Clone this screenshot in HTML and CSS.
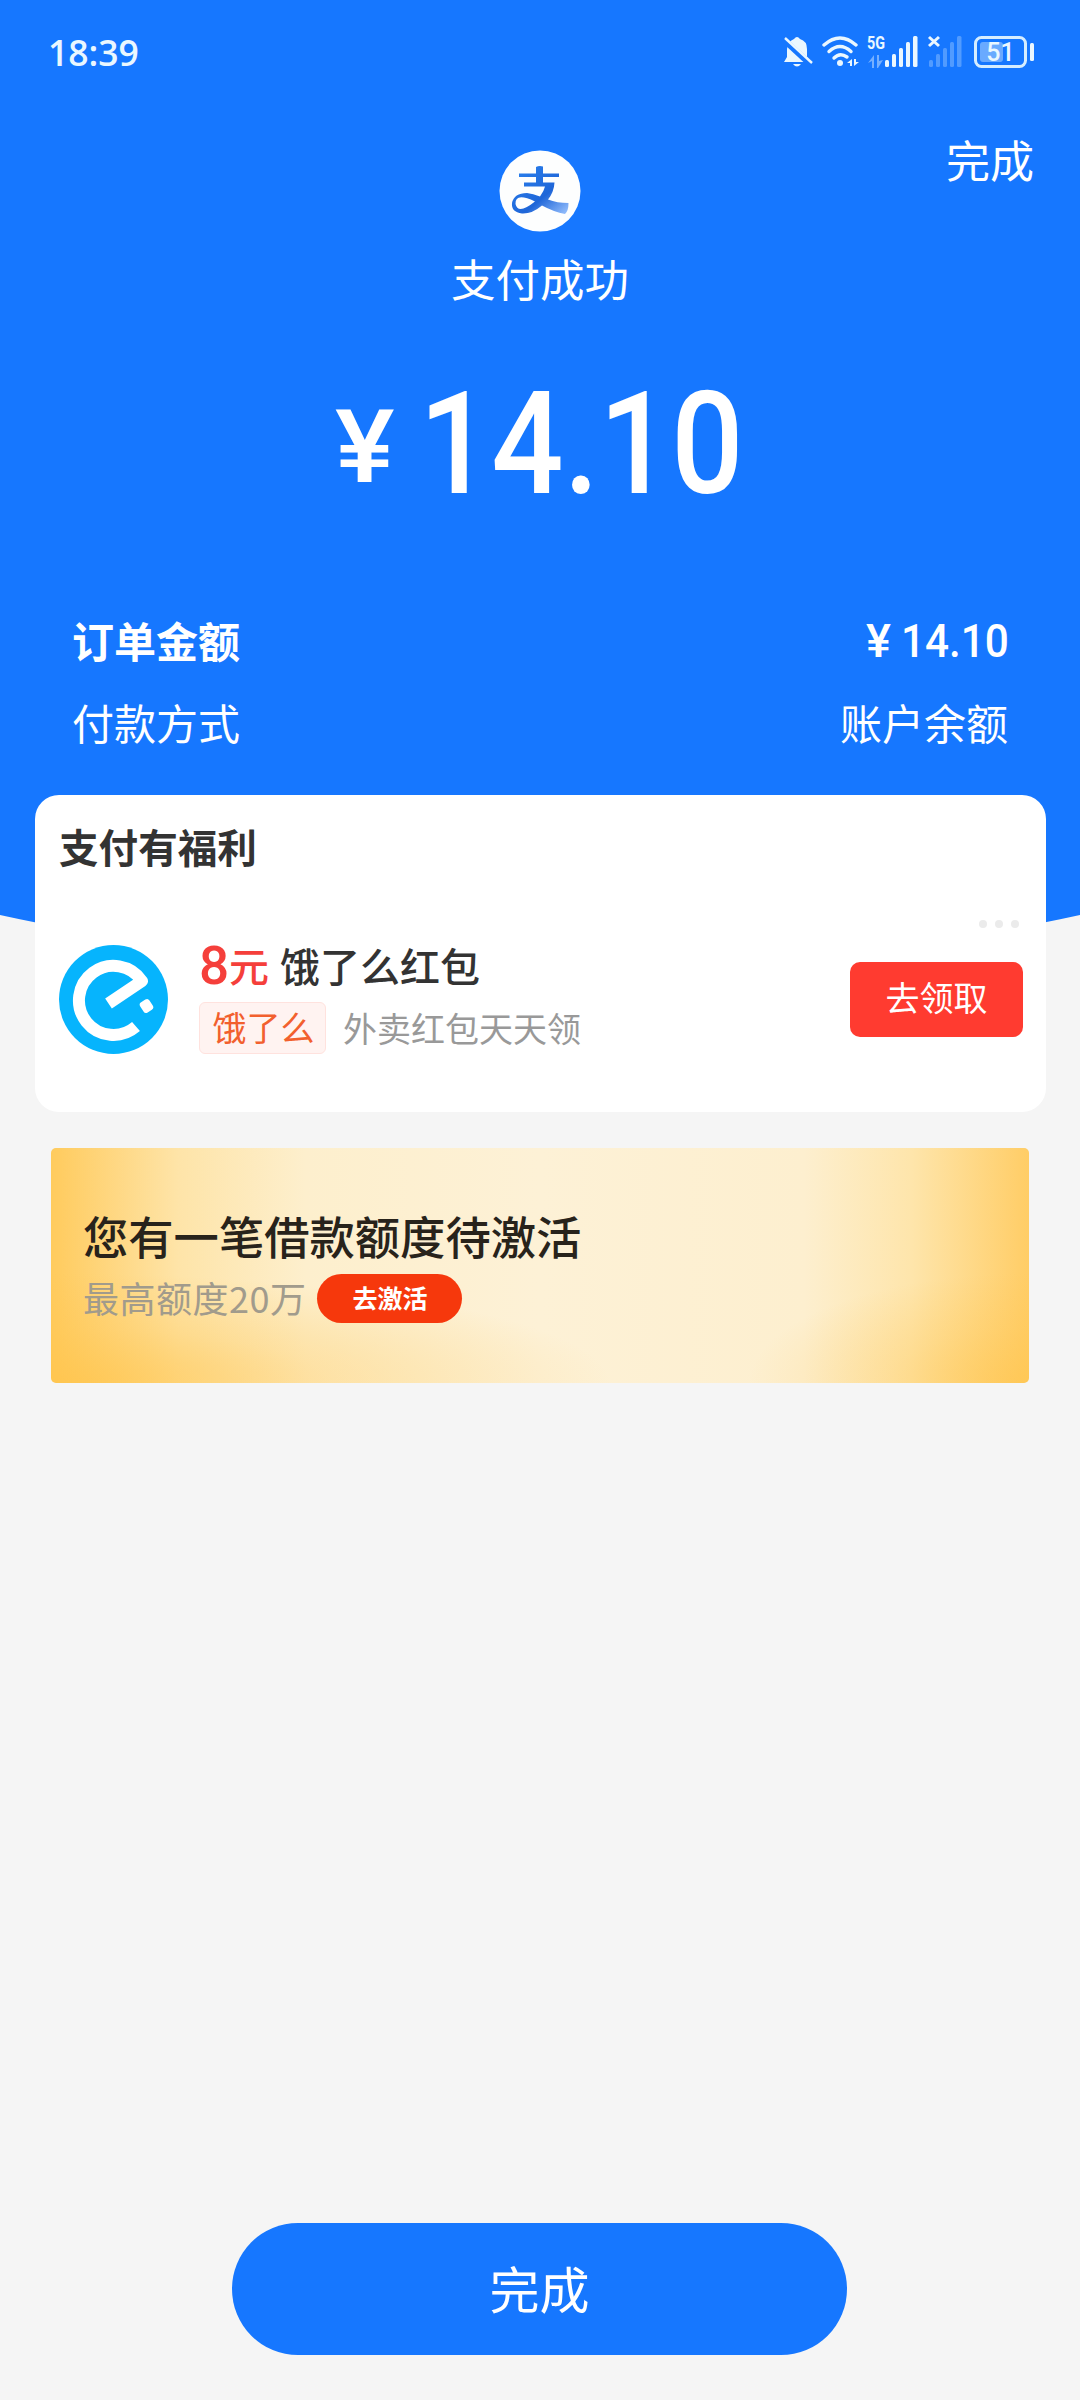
FILE: index.html
```html
<!DOCTYPE html>
<html lang="zh-CN">
<head>
<meta charset="utf-8">
<title>支付成功</title>
<link rel="stylesheet" href="styles.css">
</head>
<body>
<div class="screen">
  <header class="hero">
    <div class="status">
      <span class="clock">18:39</span>
      <svg class="status-icons" width="256" height="46" viewBox="0 -6 256 46" fill="#eaf7ff">
        <!-- muted bell -->
        <path d="M4 27 L7 22 V14 Q8 6 14 4 Q17 0 20 4 Q27 6 27 14 V22 L30 27 Z M13 29 H21 Q17 34 13 29Z"/>
        <path d="M3 4 L30 29" stroke="#1677ff" stroke-width="6"/>
        <path d="M5 3 L32 28" stroke="#eaf7ff" stroke-width="2.4"/>
        <!-- wifi -->
        <g fill="none" stroke="#eaf7ff" stroke-width="3.4" stroke-linecap="round">
          <path d="M44 10 Q60 -4 76 10"/><path d="M49 16.500 Q60 6.500 71 16.500"/><path d="M54 23 Q60 17 67 22"/>
        </g>
        <circle cx="60" cy="28" r="3"/>
        <path d="M72 31 V24 L67 28 H70 V31Z M74 24 V31 L79 27 H76V24Z"/>
        <!-- cellular -->
        <text class="net" x="87" y="14" textLength="18" lengthAdjust="spacingAndGlyphs">5G</text>
        <path opacity=".45" d="M94 20 V33 H92 V26 L88 28Z M97 20 H99 V26 L103 25 L98 33 H97Z"/>
        <g><rect x="105" y="25" width="4" height="7" rx="1.5"/><rect x="112" y="19" width="4" height="13" rx="1.5"/><rect x="119" y="13" width="4" height="19" rx="1.5"/><rect x="126" y="7" width="4" height="25" rx="1.5"/><rect x="133" y="1" width="4.500" height="31" rx="1.500"/></g>
        <g opacity=".28"><rect x="149" y="25" width="4" height="7" rx="1.5"/><rect x="156" y="19" width="4" height="13" rx="1.5"/><rect x="163" y="13" width="4" height="19" rx="1.5"/><rect x="170" y="7" width="4" height="25" rx="1.5"/><rect x="177" y="1" width="4.500" height="31" rx="1.500"/></g>
        <path d="M149 2 L159 11 M159 2 L149 11" stroke="#eaf7ff" stroke-width="3"/>
        <!-- battery -->
        <rect x="195.500" y="2.500" width="50" height="29" rx="6" fill="none" stroke="#d5edff" stroke-width="3"/>
        <rect x="200" y="7" width="23" height="20" rx="3" fill="#69aaff"/>
        <rect x="250" y="8" width="4" height="18" rx="1.500"/>
        <text class="charge" x="220.500" y="26">51</text>
      </svg>
    </div>
    <div class="topbar"><span>完成</span></div>
    <div class="result">
      <svg class="logo" width="82" height="82" viewBox="0 0 82 82">
        <defs><linearGradient id="zhi" x1="0" y1="0" x2="1" y2="1"><stop offset="0" stop-color="#2b83f0"/><stop offset=".6" stop-color="#1f66d8"/><stop offset="1" stop-color="#9cc4ff"/></linearGradient></defs>
        <circle cx="41" cy="41" r="40.500" fill="#fdfefe"/>
        <path fill="url(#zhi)" fill-rule="evenodd" d="M20 23.500 H37 V17 Q40 15.500 44 16.500 V23.500 H60 V27 H44 V32.500 H55.500 Q55 42 49 49.500 Q58 53 69.500 53 Q69.500 61 66 64 Q55 62 43 55.500 Q33 64 23 63.500 Q12 62 13 53 Q15 43 28 43 Q34 43.500 41 46.500 Q45 41 46 36.500 H25 V32.500 H37 V27 H20Z M36 51.500 Q16 42 16.500 54 Q19 65 36 51.500Z"/>
      </svg>
      <div class="result-text">支付成功</div>
      <div class="amount"><span class="yen">¥</span><span class="figure">14.10</span></div>
    </div>
    <dl class="details">
      <div class="row strong"><dt>订单金额</dt><dd class="price"><span class="price-yen">¥</span><span class="price-num">14.10</span></dd></div>
      <div class="row"><dt>付款方式</dt><dd>账户余额</dd></div>
    </dl>
  </header>
  <main class="content">
    <section class="card">
      <h2>支付有福利</h2>
      <div class="more"><i></i><i></i><i></i></div>
      <div class="offer">
        <svg class="brand" width="109" height="109" viewBox="0 0 109 109">
          <circle cx="54.500" cy="54.500" r="54.500" fill="#06b4fd"/>
          <path d="M49.500 58.500 L83 36 A34.500 34.500 0 1 0 77 81.500" fill="none" stroke="#fff" stroke-width="12" stroke-linejoin="round"/>
          <rect x="82" y="55" width="11" height="12" rx="3" transform="rotate(-33 87.500 61)" fill="#fff"/>
        </svg>
        <div class="offer-info">
          <div class="offer-title"><span class="eight">8</span><span class="yuan">元</span><span>饿了么红包</span></div>
          <div class="offer-sub"><span class="tag">饿了么</span><span>外卖红包天天领</span></div>
        </div>
        <span class="claim">去领取</span>
      </div>
    </section>
    <section class="banner">
      <div class="banner-title">您有一笔借款额度待激活</div>
      <div class="banner-sub"><span class="limit">最高额度20万</span><span class="pill">去激活</span></div>
    </section>
  </main>
  <footer class="footer"><span class="finish">完成</span></footer>
</div>
</body>
</html>
```
FILE: styles.css
```css
* { box-sizing: border-box; }
body { margin: 0; background: #f5f5f5; font-family: "Noto Sans CJK SC", sans-serif; }
.screen { width: 1080px; height: 2400px; display: flex; flex-direction: column; }
.hero { height: 945px; flex: none; display: flex; flex-direction: column; background: #1677ff; color: #fff; clip-path: ellipse(1500px 850px at 50% 122px); }
.status { height: 104px; padding: 32px 44px 0 48px; display: flex; justify-content: space-between; align-items: flex-start; }
.status-icons { margin-top: -3px; }
.clock { font: 600 35.5px/40px "Open Sans", sans-serif; color: #eaf7ff; }
.net { font: 700 18px Roboto, sans-serif; }
.charge { font: 500 25px Roboto, sans-serif; text-anchor: middle; }
.topbar { height: 46px; padding: 22px 46px 0 0; display: flex; justify-content: flex-end; font-size: 44px; line-height: 66px; }
.result { display: flex; flex-direction: column; align-items: center; }
.logo { flex: none; display: block; margin-right: 1px; }
.result-text { margin-top: 13px; font-size: 44.5px; line-height: 66px; }
.amount { margin-top: 50px; width: 410px; height: 160px; display: flex; align-items: flex-start; font-family: Roboto, sans-serif; font-weight: 500; }
.yen { flex: none; width: 84px; font-size: 102px; line-height: 160px; padding-top: 6px; }
.yen { transform: scaleX(1.1); transform-origin: left; }
.figure { font-size: 142.5px; line-height: 160px; padding-top: 4px; transform: scaleX(.893); transform-origin: left; }
.details { margin: 89px 72px 0; display: flex; flex-direction: column; gap: 21px; font-size: 42px; line-height: 60px; }
.row { display: flex; justify-content: space-between; }
.strong { font-weight: 700; }
.row dd { margin: 0; }
.row .price { display: flex; margin-right: -1px; padding-top: 1px; font-family: Roboto, sans-serif; font-weight: 500; font-size: 47px; }
.price-yen { margin-right: -2px; }
.price-num { transform: scaleX(.9); transform-origin: right; }
.content { position: relative; margin-top: -150px; }
.card { margin: 0 34px 0 35px; height: 317px; padding: 21px 23px 0 24px; background: #fff; border-radius: 24px; color: #333; }
.card h2 { margin: 0; font-size: 39.6px; line-height: 60px; font-weight: 700; }
.more { display: flex; justify-content: flex-end; gap: 8px; padding: 44px 4px 0 0; }
.more i { width: 8px; height: 8px; border-radius: 50%; background: #ebebeb; }
.offer { margin-top: 17px; display: flex; align-items: flex-start; }
.brand { flex: none; }
.offer-info { margin-left: 31px; flex: 1; }
.offer-title { display: flex; height: 57px; font-size: 40px; line-height: 40px; font-weight: 500; color: #333; }
.eight { width: 30px; font-family: Roboto, sans-serif; font-size: 53px; line-height: 43px; color: #f53f3b; }
.yuan { color: #f53f3b; margin-right: 11px; }
.offer-sub { display: flex; align-items: center; gap: 17px; font-size: 34px; line-height: 48px; color: #999; }
.tag { width: 127px; height: 52px; padding-left: 2px; text-align: center; color: #f2602e; background: #fff3f1; border: 1px solid #ffe2de; border-radius: 6px; }
.claim { margin-top: 17px; width: 173px; height: 75px; background: #ff3b30; color: #fff; border-radius: 10px; font-size: 34px; line-height: 70px; text-align: center; }
.banner { margin: 36px 51px 0; height: 235px; padding: 54px 32px 0; border-radius: 5px;
  background: radial-gradient(ellipse 280px 110px at 100% 100%, rgba(255,196,75,.6), rgba(255,196,75,.25) 50%, rgba(255,196,75,0)), radial-gradient(ellipse 560px 110px at 0 100%, rgba(255,196,75,.75), rgba(255,196,75,.3) 50%, rgba(255,196,75,0)), linear-gradient(90deg, #ffcb5d 0, #fee4a8 13%, #fdefcd 26%, #fdf1d6 50%, #fdefcf 77%, #fee5ab 88%, #ffcd66 100%); }
.banner-title { font-size: 45.3px; line-height: 66px; font-weight: 500; color: #28231b; }
.banner-sub { display: flex; align-items: center; height: 50px; margin-top: 5px; gap: 11px; font-size: 36px; line-height: 46px; color: #a19b8c; }
.limit { letter-spacing: .5px; padding-bottom: 2px; }
.pill { width: 145px; height: 49px; border-radius: 25px; background: #f6380c; color: #fff; font-size: 25px; font-weight: 700; line-height: 47px; text-align: center; }
.footer { margin-top: auto; padding: 0 1px 45px 0; display: flex; justify-content: center; }
.finish { width: 615px; height: 132px; border-radius: 66px; background: #1677ff; color: #fff; font-size: 50px; line-height: 129px; text-align: center; }
```
